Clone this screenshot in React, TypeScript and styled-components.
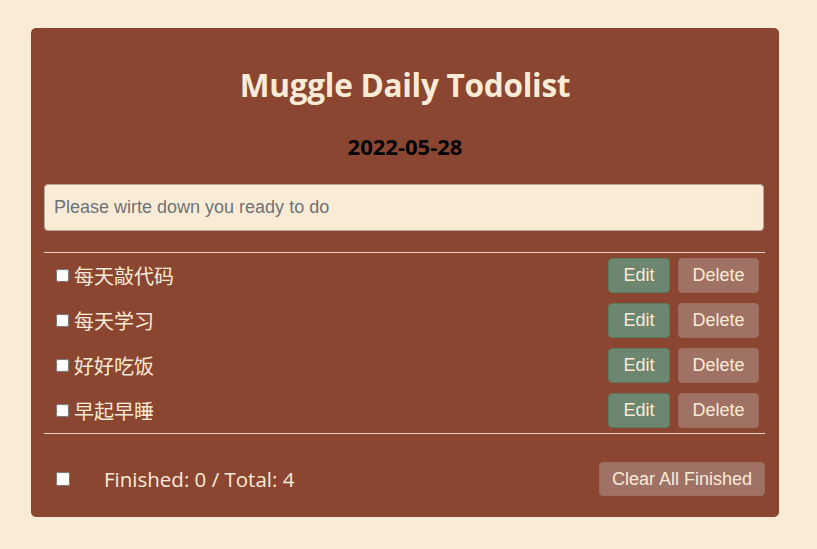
import React, { useState } from "react";
import styled, { createGlobalStyle } from "styled-components";

const Global = createGlobalStyle`
  html, body { margin: 0; padding: 0; background: #faebd7; }
  body { font-family: "Open Sans", "Noto Sans CJK SC", sans-serif; }
  * { box-sizing: border-box; }
`;

const Page = styled.div`
  padding: 28px 39px 32px 31px;
`;

const Card = styled.div`
  width: 748px;
  background: #8b4632;
  border-radius: 5px;
  padding: 37px 13px 21px 13px;
  display: flex;
  flex-direction: column;
`;

const Title = styled.h1`
  margin: 0;
  text-align: center;
  font-family: "Open Sans", sans-serif;
  font-weight: 700;
  font-size: 31.6px;
  line-height: 40px;
  color: #faebd7;
  letter-spacing: -0.3px;
`;

const DateLine = styled.h3`
  margin: 27px 0 0;
  text-align: center;
  font-family: "Open Sans", sans-serif;
  font-weight: 700;
  font-size: 22px;
  line-height: 28px;
  color: #000;
`;

const Input = styled.input`
  margin-top: 24px;
  height: 47px;
  width: 720px;
  background: #faebd7;
  border: 1px solid #b9a99b;
  border-radius: 4px;
  padding: 0 9px;
  font-family: "Liberation Sans", Arial, sans-serif;
  font-size: 18px;
  color: #333;
  outline: none;
  &::placeholder { color: #6f7274; }
`;

const List = styled.ul`
  list-style: none;
  margin: 21px 0 0;
  padding: 0;
  border-top: 1px solid #e6d3c4;
  border-bottom: 1px solid #e6d3c4;
  width: 721px;
`;

const Row = styled.li`
  height: 45px;
  display: flex;
  align-items: center;
  padding: 0 6px 0 8px;
`;

const Label = styled.label`
  display: flex;
  align-items: center;
  flex: 1;
  font-family: "Noto Sans CJK SC", "Open Sans", sans-serif;
  font-size: 20px;
  color: #faebd7;
`;

const Check = styled.input.attrs({ type: "checkbox" })<{ $big?: boolean }>`
  width: ${(p) => (p.$big ? 14 : 13)}px;
  height: ${(p) => (p.$big ? 14 : 13)}px;
  margin: 0 ${(p) => (p.$big ? 0 : 5)}px 0 4px;
`;

const Button = styled.button<{ $tone: "edit" | "del" }>`
  height: 35px;
  padding: 0;
  margin-left: 8px;
  border-radius: 4px;
  border: 1px solid ${(p) => (p.$tone === "edit" ? "#587a5d" : "#9e6c5f")};
  background: ${(p) => (p.$tone === "edit" ? "#6d8670" : "#a07266")};
  color: #faebd7;
  font-family: "Liberation Sans", Arial, sans-serif;
  font-size: 18px;
  cursor: pointer;
`;

const EditButton = styled(Button)`
  width: 62px;
`;

const DeleteButton = styled(Button)`
  width: 81px;
`;

const Footer = styled.div`
  display: flex;
  align-items: center;
  padding: 28px 0 0 8px;
  width: 721px;
`;

const Count = styled.span`
  flex: 1;
  margin-left: 34px;
  font-family: "Open Sans", sans-serif;
  font-size: 20.5px;
  color: #faebd7;
`;

const ClearButton = styled.button`
  height: 34px;
  width: 166px;
  border-radius: 4px;
  border: 1px solid #9e6c5f;
  background: #a07266;
  color: #faebd7;
  font-family: "Liberation Sans", Arial, sans-serif;
  font-size: 18px;
  padding: 0;
`;

const todos = ["每天敲代码", "每天学习", "好好吃饭", "早起早睡"];

export default function App() {
  const [text, setText] = useState("");
  return (
    <Page>
      <Global />
      <Card>
        <Title>Muggle Daily Todolist</Title>
        <DateLine>2022-05-28</DateLine>
        <Input
          value={text}
          onChange={(e) => setText(e.target.value)}
          placeholder="Please wirte down you ready to do"
        />
        <List>
          {todos.map((t) => (
            <Row key={t}>
              <Label>
                <Check />
                {t}
              </Label>
              <EditButton $tone="edit">Edit</EditButton>
              <DeleteButton $tone="del">Delete</DeleteButton>
            </Row>
          ))}
        </List>
        <Footer>
          <Check $big />
          <Count>Finished: 0 / Total: 4</Count>
          <ClearButton>Clear All Finished</ClearButton>
        </Footer>
      </Card>
    </Page>
  );
}
